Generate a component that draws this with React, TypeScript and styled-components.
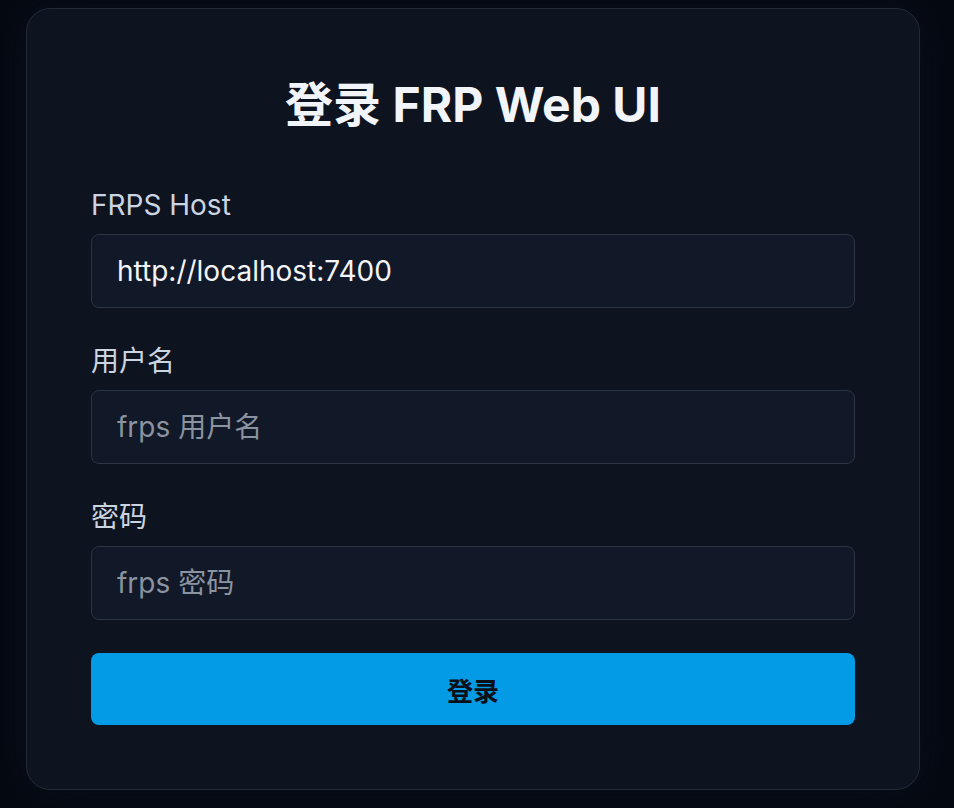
import React, { useState } from 'react';
import styled, { createGlobalStyle } from 'styled-components';

const GlobalStyle = createGlobalStyle`
  html, body {
    margin: 0;
    padding: 0;
    background: #050911;
    font-family: Inter, "Noto Sans CJK SC", "Noto Sans", sans-serif;
  }
  * {
    box-sizing: border-box;
  }
`;

const Page = styled.div`
  min-height: 808px;
  padding: 8px 0 0 26px;
`;

const Card = styled.form`
  width: 894px;
  padding: 64px;
  background: #0e1320;
  border: 1px solid #222b38;
  border-radius: 24px;
  box-shadow: 0 0 40px rgba(10, 16, 30, 0.9);
`;

const Title = styled.h1`
  margin: 0 0 47px;
  font-size: 48px;
  line-height: 64px;
  font-weight: 700;
  color: #f1f5f9;
  text-align: center;
`;

const Field = styled.div`
  display: flex;
  flex-direction: column;
  gap: 8px;
  margin-bottom: 32px;

  &:last-of-type {
    margin-bottom: 0;
  }
`;

const Label = styled.label`
  font-size: 28px;
  line-height: 42px;
  color: #cbd5e1;
`;

const Input = styled.input`
  height: 74px;
  width: 100%;
  padding: 0 25px;
  background: #111827;
  border: 1px solid #2c3544;
  border-radius: 8px;
  color: #f3f4f6;
  font-family: inherit;
  font-size: 28px;
  outline: none;

  &::placeholder {
    color: #8b93a0;
  }
`;

const SubmitButton = styled.button`
  display: block;
  width: 100%;
  height: 72px;
  margin-top: 33px;
  background: #039be5;
  border: none;
  border-radius: 8px;
  color: #0a0e17;
  font-family: inherit;
  font-size: 26px;
  font-weight: 700;
  cursor: pointer;
`;

const App: React.FC = () => {
  const [host, setHost] = useState('http://localhost:7400');
  const [user, setUser] = useState('');
  const [pass, setPass] = useState('');

  return (
    <>
      <GlobalStyle />
      <Page>
        <Card onSubmit={e => e.preventDefault()}>
          <Title>登录 FRP Web UI</Title>
          <Field>
            <Label>FRPS Host</Label>
            <Input value={host} onChange={e => setHost(e.target.value)} />
          </Field>
          <Field>
            <Label>用户名</Label>
            <Input placeholder="frps 用户名" value={user} onChange={e => setUser(e.target.value)} />
          </Field>
          <Field>
            <Label>密码</Label>
            <Input type="password" placeholder="frps 密码" value={pass} onChange={e => setPass(e.target.value)} />
          </Field>
          <SubmitButton type="submit">登录</SubmitButton>
        </Card>
      </Page>
    </>
  );
};

export default App;
